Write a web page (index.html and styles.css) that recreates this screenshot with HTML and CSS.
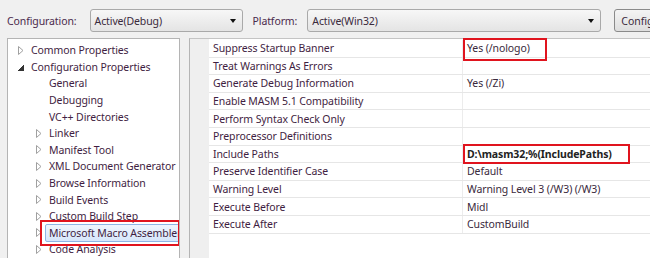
FILE: index.html
```html
<!DOCTYPE html>
<html lang="en">
<head>
    <meta charset="UTF-8">
    <title>Property Pages</title>
    <link rel="stylesheet" href="styles.css">
</head>
<body>
    <div class="toolbar">
        <label class="label">Configuration:</label>
        <div class="combo combo-config">
            <span>Active(Debug)</span>
            <span class="arrow"></span>
        </div>
        <label class="label label-platform">Platform:</label>
        <div class="combo combo-platform">
            <span>Active(Win32)</span>
            <span class="arrow"></span>
        </div>
        <button class="manager">Configuration Manager...</button>
    </div>

    <div class="main">
        <div class="tree">
            <div class="node"><svg class="tog" viewBox="0 0 6 9"><polygon points="0.5,0.5 5,4.5 0.5,8.5"/></svg>Common Properties</div>
            <div class="node"><span class="tog open"></span>Configuration Properties</div>
            <div class="node child"><span class="tog"></span>General</div>
            <div class="node child"><span class="tog"></span>Debugging</div>
            <div class="node child"><span class="tog"></span>VC++ Directories</div>
            <div class="node child"><svg class="tog" viewBox="0 0 6 9"><polygon points="0.5,0.5 5,4.5 0.5,8.5"/></svg>Linker</div>
            <div class="node child"><svg class="tog" viewBox="0 0 6 9"><polygon points="0.5,0.5 5,4.5 0.5,8.5"/></svg>Manifest Tool</div>
            <div class="node child"><svg class="tog" viewBox="0 0 6 9"><polygon points="0.5,0.5 5,4.5 0.5,8.5"/></svg>XML Document Generator</div>
            <div class="node child"><svg class="tog" viewBox="0 0 6 9"><polygon points="0.5,0.5 5,4.5 0.5,8.5"/></svg>Browse Information</div>
            <div class="node child"><svg class="tog" viewBox="0 0 6 9"><polygon points="0.5,0.5 5,4.5 0.5,8.5"/></svg>Build Events</div>
            <div class="node child"><svg class="tog" viewBox="0 0 6 9"><polygon points="0.5,0.5 5,4.5 0.5,8.5"/></svg>Custom Build Step</div>
            <div class="node child"><svg class="tog" viewBox="0 0 6 9"><polygon points="0.5,0.5 5,4.5 0.5,8.5"/></svg><span class="selected">Microsoft Macro Assembler</span></div>
            <div class="node child"><svg class="tog" viewBox="0 0 6 9"><polygon points="0.5,0.5 5,4.5 0.5,8.5"/></svg>Code Analysis</div>
            <div class="mark mark-tree"></div>
        </div>

        <div class="grid">
            <div class="row"><span class="name">Suppress Startup Banner</span><span class="value">Yes (/nologo)</span></div>
            <div class="row"><span class="name">Treat Warnings As Errors</span><span class="value"></span></div>
            <div class="row"><span class="name">Generate Debug Information</span><span class="value">Yes (/Zi)</span></div>
            <div class="row"><span class="name">Enable MASM 5.1 Compatibility</span><span class="value"></span></div>
            <div class="row"><span class="name">Perform Syntax Check Only</span><span class="value"></span></div>
            <div class="row"><span class="name">Preprocessor Definitions</span><span class="value"></span></div>
            <div class="row"><span class="name">Include Paths</span><span class="value bold">D:\masm32;%(IncludePaths)</span></div>
            <div class="row"><span class="name">Preserve Identifier Case</span><span class="value">Default</span></div>
            <div class="row"><span class="name">Warning Level</span><span class="value">Warning Level 3 (/W3) (/W3)</span></div>
            <div class="row"><span class="name">Execute Before</span><span class="value">Midl</span></div>
            <div class="row"><span class="name">Execute After</span><span class="value">CustomBuild</span></div>
            <div class="mark mark-nologo"></div>
            <div class="mark mark-include"></div>
        </div>
    </div>
</body>
</html>
```

FILE: styles.css
```css
body {
    margin: 0;
    width: 650px;
    height: 258px;
    overflow: hidden;
    background-color: #f0f0f0;
    font-family: "Noto Sans", "Open Sans", sans-serif;
    font-size: 10.5px;
    letter-spacing: -0.1px;
    color: #3f1e42;
}
.toolbar {
    display: flex;
    align-items: center;
    height: 23px;
    padding: 9px 0 0 7px;
    white-space: nowrap;
}
.toolbar > * {
    flex: none;
}
.label {
    color: #4a2a4c;
}
.combo {
    display: flex;
    align-items: center;
    justify-content: space-between;
    box-sizing: border-box;
    height: 23px;
    padding: 0 6px 0 4px;
    border: 1px solid #a9a9a9;
    border-radius: 3px;
    background: linear-gradient(#f7f7f7, #e4e4e4);
    color: #3a2a3c;
}
.combo-config {
    width: 153px;
    margin-left: 13px;
}
.label-platform {
    margin-left: 10px;
}
.combo-platform {
    width: 294px;
    margin-left: 10px;
}
.arrow {
    width: 0;
    height: 0;
    border-left: 3.5px solid transparent;
    border-right: 3.5px solid transparent;
    border-top: 4px solid #111;
}
.manager {
    box-sizing: border-box;
    height: 23px;
    margin-left: 13px;
    padding: 0 6px;
    border: 1px solid #8a8a8a;
    border-radius: 3px;
    background: linear-gradient(#f4f4f4, #dedede);
    font: inherit;
    color: #3a2a3c;
    text-align: left;
}
.main {
    display: flex;
    margin-top: 6px;
}
.tree {
    position: relative;
    box-sizing: border-box;
    width: 173px;
    height: 240px;
    margin-left: 7px;
    padding-top: 3px;
    border: 1px solid #b4b4b4;
    background-color: white;
    white-space: nowrap;
    overflow: hidden;
}
.node {
    display: flex;
    align-items: center;
    height: 16.6px;
    padding-left: 10px;
}
.node.child {
    padding-left: 28px;
}
.tog {
    width: 6px;
    height: 9px;
    margin-right: 7px;
    flex: none;
}
svg.tog {
    fill: white;
    stroke: #a0a0a0;
    stroke-width: 1;
}
.tog.open {
    width: 6px;
    height: 6px;
    margin-top: 2px;
    background: linear-gradient(to bottom right, transparent 50%, #333 50%);
}
.selected {
    margin-left: -4px;
    padding: 1px 6px 1px 3px;
    border: 1px solid #8fb4e4;
    border-radius: 2px;
    background: linear-gradient(#eef5fd, #d6e6fb);
}
.grid {
    position: relative;
    flex: 1;
    height: 240px;
    margin-left: 9px;
    padding-top: 1px;
    border-left: 1px solid #b4b4b4;
    border-top: 1px solid #c4c4c4;
    background: linear-gradient(to right, #efefef 19px, white 19px);
    white-space: nowrap;
}
.row {
    display: flex;
    box-sizing: border-box;
    height: 17.6px;
    margin-left: 19px;
    border-bottom: 1px solid #e6e6e6;
    align-items: center;
}
.name {
    box-sizing: border-box;
    width: 254px;
    height: 100%;
    padding-left: 4px;
    display: flex;
    align-items: center;
    border-right: 1px solid #ececec;
}
.value {
    padding-left: 4px;
    color: #3a2a3c;
}
.value.bold {
    font-weight: bold;
    color: #222;
}
.mark {
    position: absolute;
    border: 2px solid #e0141e;
}
.mark-tree {
    left: 32px;
    top: 181px;
    width: 136px;
    height: 22px;
}
.mark-nologo {
    left: 273px;
    top: -1px;
    width: 80px;
    height: 19px;
}
.mark-include {
    left: 273px;
    top: 105px;
    width: 163px;
    height: 16px;
}
```
